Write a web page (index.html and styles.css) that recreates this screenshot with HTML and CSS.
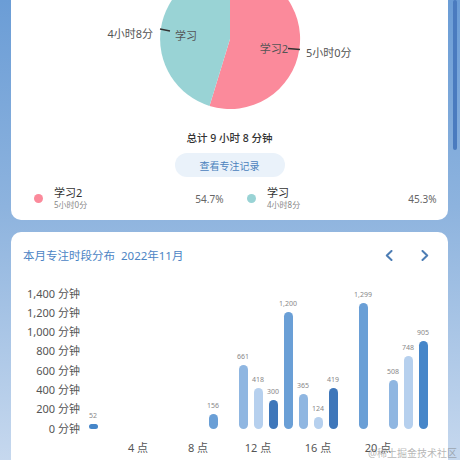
FILE: index.html
```html
<!DOCTYPE html>
<html lang="zh-CN">
<head>
    <meta charset="UTF-8">
    <meta name="viewport" content="width=device-width, initial-scale=1.0">
    <title>专注统计</title>
    <link rel="stylesheet" href="styles.css">
</head>
<body>
    <!-- Pie summary -->
    <div class="card summary">
        <svg class="pie" viewBox="0 0 437 130" xmlns="http://www.w3.org/2000/svg">
            <path d="M219,39 L219,-31 A70,70 0 1,1 198.5,105.9 Z" fill="#fb8a9b"/>
            <path d="M219,39 L198.5,105.9 A70,70 0 0,1 219,-31 Z" fill="#99d3d5"/>
            <path d="M149,29 L159,31" stroke="#333" stroke-width="1.3" fill="none"/>
            <path d="M277,48.5 L289,49.5" stroke="#333" stroke-width="1.3" fill="none"/>
            <text x="142" y="38" text-anchor="end" class="pie-label">4小时8分</text>
            <text x="164" y="40" class="pie-label">学习</text>
            <text x="277" y="53" text-anchor="end" class="pie-label">学习2</text>
            <text x="295" y="57" class="pie-label">5小时0分</text>
        </svg>
        <div class="total">总计 9 小时 8 分钟</div>
        <button class="record-btn">查看专注记录</button>
        <div class="legend">
            <div class="legend-item">
                <span class="dot pink"></span>
                <div class="legend-text">
                    <div class="legend-name">学习2</div>
                    <div class="legend-sub">5小时0分</div>
                </div>
                <span class="legend-pct">54.7%</span>
            </div>
            <div class="legend-item">
                <span class="dot teal"></span>
                <div class="legend-text">
                    <div class="legend-name">学习</div>
                    <div class="legend-sub">4小时8分</div>
                </div>
                <span class="legend-pct">45.3%</span>
            </div>
        </div>
    </div>

    <!-- Monthly distribution -->
    <div class="card trend">
        <div class="trend-head">
            <span class="trend-title">本月专注时段分布&nbsp;&nbsp;2022年11月</span>
            <div class="nav">
                <svg width="8" height="11" viewBox="0 0 8 11"><path d="M6.5,1 L1.8,5.5 L6.5,10" stroke="#4d7db4" stroke-width="2" fill="none" stroke-linecap="round" stroke-linejoin="round"/></svg>
                <svg width="8" height="11" viewBox="0 0 8 11"><path d="M1.5,1 L6.2,5.5 L1.5,10" stroke="#4d7db4" stroke-width="2" fill="none" stroke-linecap="round" stroke-linejoin="round"/></svg>
            </div>
        </div>

        <div class="chart">
            <div class="y-axis">
                <span>1,400 分钟</span>
                <span>1,200 分钟</span>
                <span>1,000 分钟</span>
                <span>800 分钟</span>
                <span>600 分钟</span>
                <span>400 分钟</span>
                <span>200 分钟</span>
                <span>0 分钟</span>
            </div>
            <div class="plot">
                <div class="slot"><span class="val">52</span><span class="bar shade-2" style="height:5px"></span></div>
                <div class="slot"></div>
                <div class="slot"></div>
                <div class="slot"></div>
                <div class="slot"></div>
                <div class="slot"></div>
                <div class="slot"></div>
                <div class="slot"></div>
                <div class="slot"><span class="val">156</span><span class="bar shade-3" style="height:15px"></span></div>
                <div class="slot"></div>
                <div class="slot"><span class="val">661</span><span class="bar shade-4" style="height:64px"></span></div>
                <div class="slot"><span class="val">418</span><span class="bar shade-5" style="height:41px"></span></div>
                <div class="slot"><span class="val">300</span><span class="bar shade-1" style="height:29px"></span></div>
                <div class="slot"><span class="val">1,200</span><span class="bar shade-3" style="height:117px"></span></div>
                <div class="slot"><span class="val">365</span><span class="bar shade-4" style="height:35.5px"></span></div>
                <div class="slot"><span class="val">124</span><span class="bar shade-5" style="height:12px"></span></div>
                <div class="slot"><span class="val">419</span><span class="bar shade-1" style="height:41px"></span></div>
                <div class="slot"></div>
                <div class="slot"><span class="val">1,299</span><span class="bar shade-3" style="height:126px"></span></div>
                <div class="slot"></div>
                <div class="slot"><span class="val">508</span><span class="bar shade-4" style="height:49.5px"></span></div>
                <div class="slot"><span class="val">748</span><span class="bar shade-5" style="height:73px"></span></div>
                <div class="slot"><span class="val">905</span><span class="bar shade-2" style="height:88px"></span></div>
                <div class="slot"></div>
            </div>
        </div>
        <div class="x-axis">
            <span class="tick" style="grid-column:4">4 点</span>
            <span class="tick" style="grid-column:8">8 点</span>
            <span class="tick" style="grid-column:12">12 点</span>
            <span class="tick" style="grid-column:16">16 点</span>
            <span class="tick" style="grid-column:20">20 点</span>
        </div>
    </div>

    <div class="scroll-thumb"></div>
    <div class="watermark">@稀土掘金技术社区</div>
</body>
</html>
```

FILE: styles.css
```css
* {
    margin: 0;
    padding: 0;
    box-sizing: border-box;
}

html, body {
    width: 460px;
    height: 460px;
    overflow: hidden;
}

body {
    position: relative;
    padding: 0 12px 0 11px;
    font-family: "Noto Sans", "Noto Sans CJK SC", sans-serif;
    color: #555;
    background: linear-gradient(180deg, #6b9dd6 0%, #8db3de 45%, #c6d8ee 100%);
}

.card {
    width: 437px;
    background: #fff;
    border-radius: 10px;
}

/* ---- summary card ---- */
.summary {
    border-radius: 0 0 10px 10px;
    padding-bottom: 10px;
}

.pie {
    display: block;
    width: 437px;
    height: 130px;
}

.pie-label {
    font-family: "Noto Sans", "Noto Sans CJK SC", sans-serif;
    font-size: 11px;
    fill: #555;
}

.total {
    text-align: center;
    font-size: 10.5px;
    line-height: 16px;
    font-weight: 500;
    color: #333;
}

.record-btn {
    display: block;
    width: 110px;
    height: 24px;
    margin: 7px auto 0;
    border: none;
    border-radius: 12px;
    background: #eaf2fa;
    color: #4b82bd;
    font-family: inherit;
    font-size: 10px;
}

.legend {
    display: grid;
    grid-template-columns: 190px 190px;
    column-gap: 23px;
    padding-left: 22.5px;
    margin-top: 10px;
}

.legend-item {
    display: flex;
    align-items: center;
}

.dot {
    width: 9px;
    height: 9px;
    border-radius: 50%;
    margin-right: 11.5px;
}

.pink { background: #fb8a9b; }
.teal { background: #99d3d5; }

.legend-name {
    font-size: 11px;
    line-height: 12px;
    color: #333;
}

.legend-sub {
    font-size: 8px;
    line-height: 11px;
    color: #888;
}

.legend-pct {
    margin-left: auto;
    font-size: 10px;
    color: #666;
}

/* ---- distribution card ---- */
.trend {
    margin-top: 12px;
    padding-top: 15px;
    height: 240px;
}

.trend-head {
    display: flex;
    align-items: center;
    height: 16px;
    padding: 0 19px 0 12px;
}

.trend-title {
    font-size: 11.5px;
    color: #4c84c4;
}

.nav {
    margin-left: auto;
    display: flex;
    gap: 28px;
}

.nav svg {
    display: block;
}

.chart {
    display: flex;
    margin-top: 20.5px;
}

.y-axis {
    width: 69px;
    display: flex;
    flex-direction: column;
    text-align: right;
    font-size: 11px;
    line-height: 19.3px;
    color: #555;
    white-space: nowrap;
}

.plot {
    display: flex;
    align-items: flex-end;
    margin-left: 5.5px;
    padding-bottom: 8.5px;
}

.slot {
    width: 15px;
    display: flex;
    flex-direction: column;
    align-items: center;
}

.val {
    font-size: 7px;
    line-height: 8px;
    margin-bottom: 4px;
    color: #888;
    white-space: nowrap;
}

.bar {
    display: block;
    width: 9px;
    border-radius: 4.5px;
}

.shade-1 { background: #3f77ba; }
.shade-2 { background: #4686c9; }
.shade-3 { background: #6a9fd6; }
.shade-4 { background: #8fb6e1; }
.shade-5 { background: #b6d0ee; }

.x-axis {
    display: grid;
    grid-template-columns: repeat(24, 15px);
    margin: 1px 0 0 74.5px;
    font-size: 11px;
    line-height: 18px;
    color: #555;
}

.tick {
    grid-row: 1;
    display: flex;
    justify-content: center;
    white-space: nowrap;
}

/* ---- overlays ---- */
.scroll-thumb {
    position: absolute;
    top: 0;
    right: 3px;
    width: 4px;
    height: 150px;
    border-radius: 2px;
    background: #4a7bbf;
}

.watermark {
    position: absolute;
    right: 3px;
    bottom: 0;
    font-size: 10px;
    line-height: 14px;
    color: rgba(120, 120, 120, 0.55);
}
```
